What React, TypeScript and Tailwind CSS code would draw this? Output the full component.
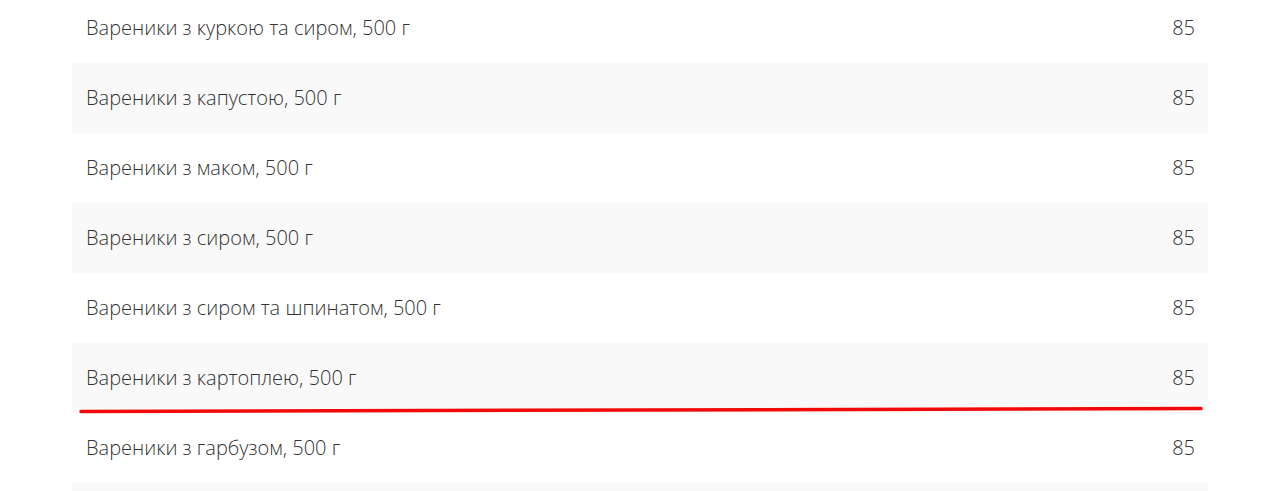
const items = [
  "Вареники з куркою та сиром, 500 г",
  "Вареники з капустою, 500 г",
  "Вареники з маком, 500 г",
  "Вареники з сиром, 500 г",
  "Вареники з сиром та шпинатом, 500 г",
  "Вареники з картоплею, 500 г",
  "Вареники з гарбузом, 500 г",
  "",
];

export default function App() {
  return (
    <div className="h-[491px] overflow-hidden bg-white font-['Open_Sans',sans-serif]">
      <div className="relative ml-[72px] mt-[-7px] w-[1136px]">
        {items.map((name, i) => (
          <div
            key={i}
            className={`flex h-[70px] items-center justify-between pl-[14px] pr-[13px] text-[20px] font-light text-[#333] ${
              i % 2 === 1 ? "bg-[#f9f9f9]" : "bg-white"
            }`}
          >
            <span>{name}</span>
            <span>{name ? "85" : ""}</span>
          </div>
        ))}
        <svg
          className="pointer-events-none absolute left-[-72px] top-[7px]"
          width="1265"
          height="491"
        >
          <path
            d="M81 411.5 C 300 410.5, 700 409.5, 1201 408.5"
            stroke="#f20a0a"
            strokeWidth="3.5"
            strokeLinecap="round"
            fill="none"
          />
        </svg>
      </div>
    </div>
  );
}
